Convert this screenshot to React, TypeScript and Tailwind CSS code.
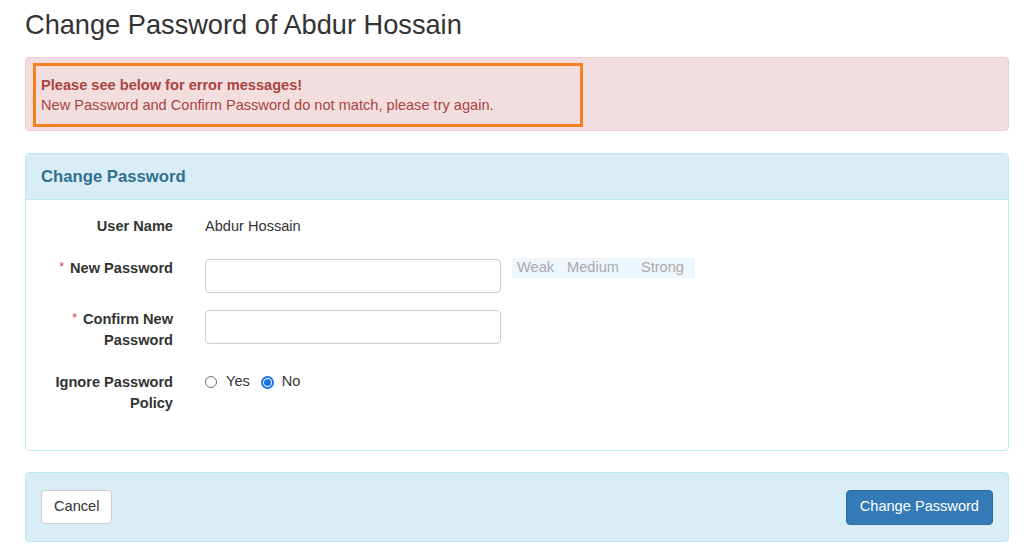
import React from "react";

const font = { fontFamily: '"Liberation Sans", Arial, Helvetica, sans-serif' };

function Label({ children, required }: { children: React.ReactNode; required?: boolean }) {
  return (
    <div className="w-[132px] shrink-0 text-right font-bold text-[14.6px] leading-[21px] text-[#333]">
      {required && <span className="text-[#c7413f] font-normal text-[12px] mr-[6px] align-top relative top-[-1px]">*</span>}
      {children}
    </div>
  );
}

export default function App() {
  return (
    <div style={font} className="w-[1024px] h-[556px] bg-white pl-[25px] pr-[15px] overflow-hidden text-[#333]">
      <h1 className="pt-[10px] text-[27.2px] leading-[30px] font-normal text-[#333]">Change Password of Abdur Hossain</h1>

      <div className="mt-[17px] h-[74px] border border-[#ebccd1] bg-[#f2dede] rounded-[4px] pl-[7px] pt-[5px]">
        <div className="w-[550px] h-[64px] border-[3px] border-[#f7821f] pl-[5px] pt-[9px] text-[14.6px] leading-[20px] text-[#a94442]">
          <div className="font-bold">Please see below for error messages!</div>
          <div>New Password and Confirm Password do not match, please try again.</div>
        </div>
      </div>

      <div className="mt-[22px] border border-[#bce8f1] rounded-[4px] h-[298px] flex flex-col">
        <div className="h-[46px] bg-[#d9edf7] border-b border-[#bce8f1] rounded-t-[3px] px-[15px] flex items-center text-[16.7px] font-bold text-[#31708f]">
          Change Password
        </div>
        <div className="pl-[15px] pt-[16px]">
          <div className="flex items-start gap-[32px]">
            <Label>User Name</Label>
            <div className="text-[14.6px] leading-[21px] text-[#333]">Abdur Hossain</div>
          </div>

          <div className="flex items-start gap-[32px] mt-[21px]">
            <Label required>New Password</Label>
            <input type="password" className="mt-[0.5px] w-[296px] h-[34px] border border-[#ccc] rounded-[4px] shrink-0 outline-none" />
            <div className="ml-[-21px] mt-[0px] w-[183px] h-[20px] bg-[#eef6fd] flex items-center text-[14.6px] text-[#a9a9a9] pl-[5px]">
              <span>Weak</span>
              <span className="ml-[13px]">Medium</span>
              <span className="ml-[22px]">Strong</span>
            </div>
          </div>

          <div className="flex items-start gap-[32px] mt-[16px]">
            <Label required>Confirm New Password</Label>
            <input type="password" className="mt-[1px] w-[296px] h-[34px] border border-[#ccc] rounded-[4px] shrink-0 outline-none" />
          </div>

          <div className="flex items-start gap-[32px] mt-[21px]">
            <Label>Ignore Password Policy</Label>
            <div className="flex items-center h-[21px] text-[14.6px] text-[#333]">
              <span className="w-[12px] h-[12px] rounded-full border border-[#767676] bg-white inline-block"></span>
              <span className="ml-[9px]">Yes</span>
              <span className="ml-[11px] w-[13px] h-[13px] rounded-full border-2 border-[#1a73e8] bg-white flex items-center justify-center">
                <span className="w-[7px] h-[7px] rounded-full bg-[#1a73e8] inline-block"></span>
              </span>
              <span className="ml-[8px]">No</span>
            </div>
          </div>
        </div>
      </div>

      <div className="mt-[21px] h-[70px] bg-[#d9edf7] border border-[#bce8f1] rounded-[4px] px-[15px] flex items-center justify-between">
        <button className="h-[34px] px-[12px] bg-white border border-[#ccc] rounded-[4px] text-[14.6px] text-[#333]">Cancel</button>
        <button className="h-[35px] px-[13px] bg-[#337ab7] border border-[#2e6da4] rounded-[4px] text-[14.6px] text-white">Change Password</button>
      </div>
    </div>
  );
}
